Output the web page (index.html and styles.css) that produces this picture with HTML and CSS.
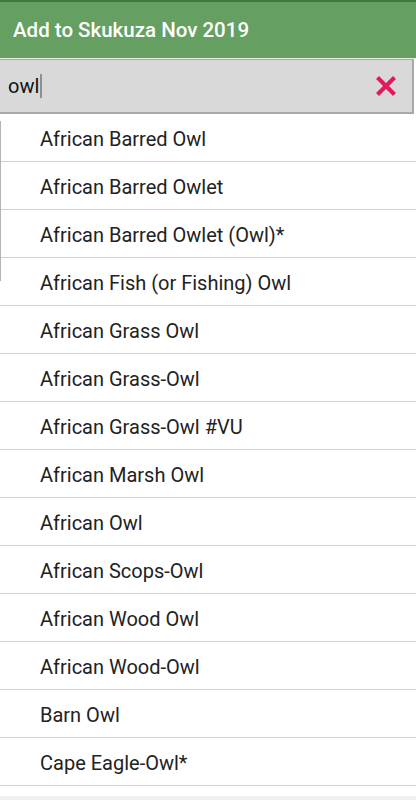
FILE: index.html
```html
<!DOCTYPE html>
<html>
<head>
<meta charset="utf-8">
<link rel="stylesheet" href="styles.css">
</head>
<body>
<div class="app">
  <header class="header">Add to Skukuza Nov 2019</header>
  <div class="search">
    <div class="query">owl<span class="caret"></span></div>
    <svg class="clear" width="20" height="20" viewBox="0 0 20 20"><path d="M3 3 L17 17 M17 3 L3 17" stroke="#e2195b" stroke-width="4.2" stroke-linecap="square"/></svg>
  </div>
  <div class="listwrap">
    <div class="edge"></div>
    <ul class="list">
      <li>African Barred Owl</li>
      <li>African Barred Owlet</li>
      <li>African Barred Owlet (Owl)*</li>
      <li>African Fish (or Fishing) Owl</li>
      <li>African Grass Owl</li>
      <li>African Grass-Owl</li>
      <li>African Grass-Owl #VU</li>
      <li>African Marsh Owl</li>
      <li>African Owl</li>
      <li>African Scops-Owl</li>
      <li>African Wood Owl</li>
      <li>African Wood-Owl</li>
      <li>Barn Owl</li>
      <li>Cape Eagle-Owl*</li>
    </ul>
  </div>
  <div class="footer"></div>
</div>
</body>
</html>
```
FILE: styles.css
```css
* { box-sizing: border-box; }
html, body { margin: 0; padding: 0; background: #fff; }
body { font-family: Roboto, "Noto Sans", sans-serif; width: 416px; height: 800px; overflow: hidden; }
.app { display: flex; flex-direction: column; }
.header {
  height: 59px;
  background: #65a062;
  border-top: 2px solid #3f7b3c;
  border-bottom: 1px solid #e6efe5;
  color: #fff;
  font-weight: 500;
  font-size: 20.5px;
  padding-left: 13px;
  display: flex;
  align-items: center;
  padding-bottom: 1px;
}
.search {
  height: 55px;
  margin-right: 2px;
  background: #d9d9d9;
  border-top: 1px solid #a9a9a9;
  border-bottom: 2px solid #a9a9a9;
  border-right: 2px solid #a9a9a9;
  display: flex;
  align-items: center;
  justify-content: space-between;
  padding-left: 8px;
  padding-right: 16px;
}
.query { font-size: 20px; color: #111; display: flex; align-items: center; }
.caret { display: inline-block; width: 2px; height: 24px; background: #8f8f8f; margin-left: 1px; }
.clear { display: block; }
.listwrap { position: relative; }
.edge { position: absolute; left: 0; top: 7px; width: 1px; height: 160px; background: #b5b5b5; }
.list { list-style: none; margin: 0; padding: 0; }
.list li {
  height: 48px;
  border-bottom: 1px solid #d2d2d2;
  padding-left: 40px;
  display: flex;
  align-items: center;
  font-size: 20px;
  font-weight: 400;
  color: #222;
  padding-top: 2px;
}
.footer { height: 20px; margin-top: 10px; background: #f0f0f0; }
```
